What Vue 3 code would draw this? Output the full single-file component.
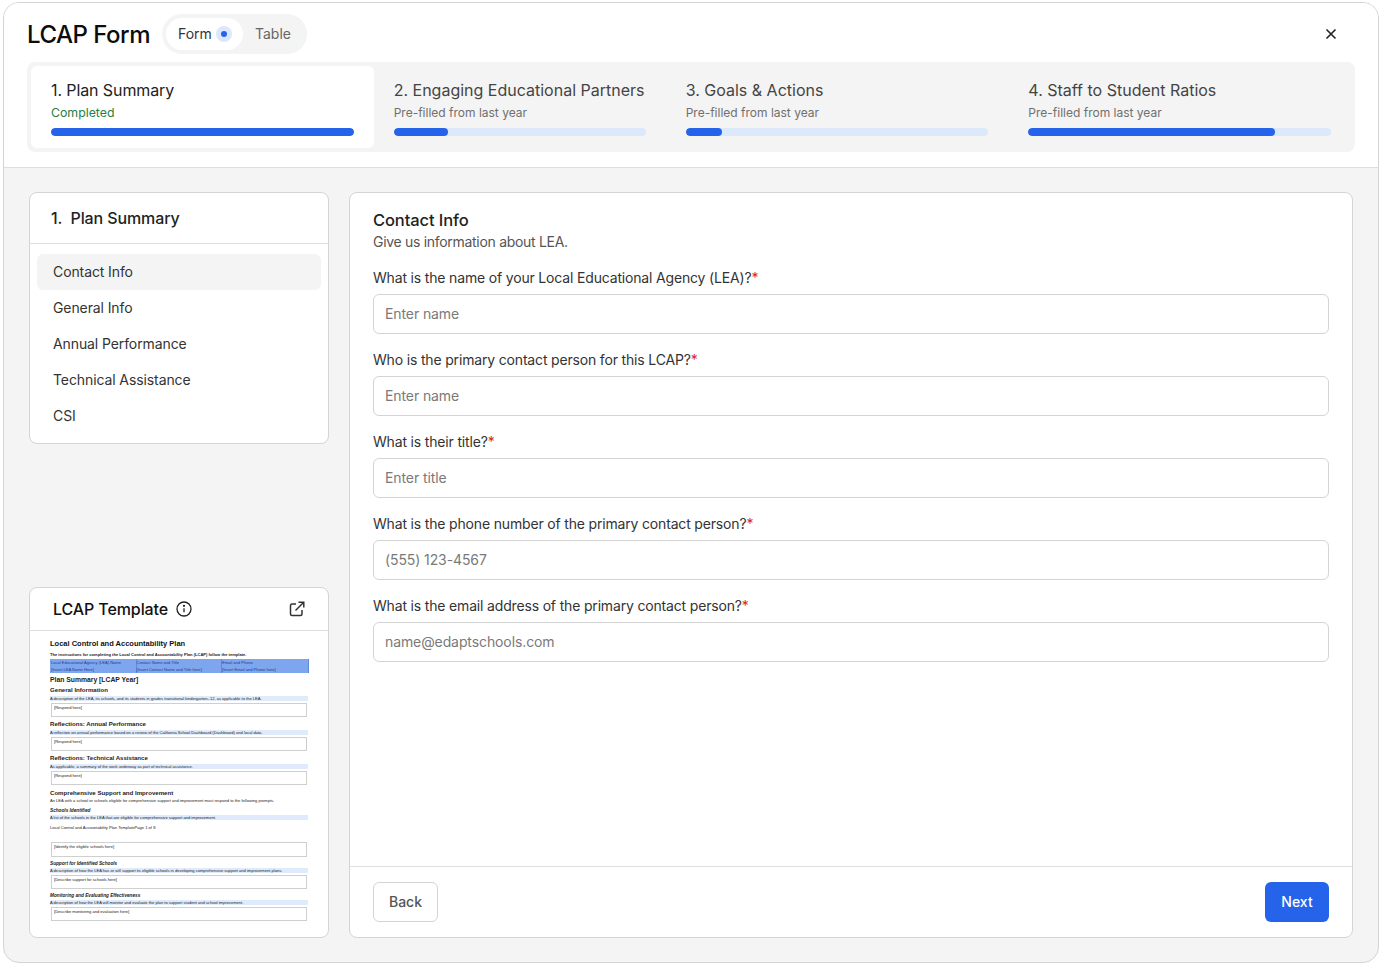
<template>
  <div class="window">
    <header class="top">
      <div class="title-row">
        <h1>LCAP Form</h1>
        <div class="toggle">
          <div class="toggle-on">
            Form
            <span class="dot"><i></i></span>
          </div>
          <div class="toggle-off">Table</div>
        </div>
        <svg class="close" width="12" height="12" viewBox="0 0 12 12" fill="none" stroke="#222" stroke-width="1.6">
          <path d="M1.5 1.5l9 9M10.5 1.5l-9 9" />
        </svg>
      </div>
      <div class="steps">
        <div v-for="(s, i) in steps" :key="s.title" class="step" :class="{ active: i === 0 }">
          <div class="step-title">{{ s.title }}</div>
          <div class="step-sub">{{ s.sub }}</div>
          <div class="track"><div class="fill" :style="{ width: s.pct + '%' }"></div></div>
        </div>
      </div>
    </header>

    <div class="body">
      <aside class="side">
        <div class="card nav">
          <div class="nav-head">1. &nbsp;Plan Summary</div>
          <ul>
            <li v-for="(n, i) in navItems" :key="n" :class="{ current: i === 0 }">{{ n }}</li>
          </ul>
        </div>

        <div class="card template">
          <div class="tpl-head">
            <span class="tpl-title">LCAP Template</span>
            <svg width="16" height="16" viewBox="0 0 16 16" fill="none" stroke="#222" stroke-width="1.3">
              <circle cx="8" cy="8" r="7" />
              <path d="M8 7.2v4" />
              <circle cx="8" cy="4.8" r=".5" fill="#222" />
            </svg>
            <svg class="ext" width="16" height="16" viewBox="0 0 16 16" fill="none" stroke="#333" stroke-width="1.5">
              <path d="M7 3H3a1.5 1.5 0 0 0-1.500 1.500V13A1.500 1.500 0 0 0 3 14.500h8.500A1.500 1.500 0 0 0 13 13V9" />
              <path d="M6.500 9.500L14.500 1.500M9.500 1.200h5.300v5.300" />
            </svg>
          </div>
          <div class="doc">
            <div class="d-title">Local Control and Accountability Plan</div>
            <div class="d-intro">The instructions for completing the Local Control and Accountability Plan (LCAP) follow the template.</div>
            <div class="d-table">
              <span>Local Educational Agency (LEA) Name</span><span>Contact Name and Title</span><span>Email and Phone</span>
              <span>[Insert LEA Name Here]</span><span>[Insert Contact Name and Title here]</span><span>[Insert Email and Phone here]</span>
            </div>
            <div class="d-h2">Plan Summary [LCAP Year]</div>
            <div class="d-h3">General Information</div>
            <div class="d-desc">A description of the LEA, its schools, and its students in grades transitional kindergarten–12, as applicable to the LEA.</div>
            <div class="d-box">[Respond here]</div>
            <div class="d-h3">Reflections: Annual Performance</div>
            <div class="d-desc">A reflection on annual performance based on a review of the California School Dashboard (Dashboard) and local data.</div>
            <div class="d-box">[Respond here]</div>
            <div class="d-h3">Reflections: Technical Assistance</div>
            <div class="d-desc">As applicable, a summary of the work underway as part of technical assistance.</div>
            <div class="d-box">[Respond here]</div>
            <div class="d-h3 gap">Comprehensive Support and Improvement</div>
            <div class="d-plain">An LEA with a school or schools eligible for comprehensive support and improvement must respond to the following prompts.</div>
            <div class="d-h4">Schools Identified</div>
            <div class="d-desc">A list of the schools in the LEA that are eligible for comprehensive support and improvement.</div>
            <div class="d-foot">Local Control and Accountability Plan TemplatePage 1 of 8</div>
            <div class="d-box tall">[Identify the eligible schools here]</div>
            <div class="d-h4">Support for Identified Schools</div>
            <div class="d-desc">A description of how the LEA has or will support its eligible schools in developing comprehensive support and improvement plans.</div>
            <div class="d-box">[Describe support for schools here]</div>
            <div class="d-h4">Monitoring and Evaluating Effectiveness</div>
            <div class="d-desc">A description of how the LEA will monitor and evaluate the plan to support student and school improvement.</div>
            <div class="d-box">[Describe monitoring and evaluation here]</div>
          </div>
        </div>
      </aside>

      <main class="card form">
        <div class="form-scroll">
          <h2>Contact Info</h2>
          <p class="lead">Give us information about LEA.</p>
          <div v-for="f in fields" :key="f.label" class="field">
            <label>{{ f.label }}<em>*</em></label>
            <input type="text" :placeholder="f.placeholder" />
          </div>
        </div>
        <footer class="form-foot">
          <button class="btn back">Back</button>
          <button class="btn next">Next</button>
        </footer>
      </main>
    </div>
  </div>
</template>

<script setup>
const steps = [
  { title: "1. Plan Summary", sub: "Completed", pct: 100 },
  { title: "2. Engaging Educational Partners", sub: "Pre-filled from last year", pct: 21.5 },
  { title: "3. Goals & Actions", sub: "Pre-filled from last year", pct: 12 },
  { title: "4. Staff to Student Ratios", sub: "Pre-filled from last year", pct: 81.5 },
];

const navItems = ["Contact Info", "General Info", "Annual Performance", "Technical Assistance", "CSI"];

const fields = [
  { label: "What is the name of your Local Educational Agency (LEA)?", placeholder: "Enter name" },
  { label: "Who is the primary contact person for this LCAP?", placeholder: "Enter name" },
  { label: "What is their title?", placeholder: "Enter title" },
  { label: "What is the phone number of the primary contact person?", placeholder: "(555) 123-4567" },
  { label: "What is the email address of the primary contact person?", placeholder: "name@edaptschools.com" },
];
</script>

<style>
html,
body {
  background: #ffffff;
}
</style>

<style scoped>
.window {
  box-sizing: border-box;
  width: 1376px;
  height: 961px;
  margin: 2px 0 0 3px;
  border: 1px solid #d4d4d4;
  border-radius: 16px;
  overflow: hidden;
  display: flex;
  flex-direction: column;
  background: #f4f4f4;
  font-family: Inter, "Noto Sans", sans-serif;
  color: #222;
}

.top {
  box-sizing: border-box;
  height: 165px;
  flex: none;
  background: #fff;
  border-bottom: 1px solid #dedede;
  padding: 11px 23px 0;
}

.title-row {
  display: flex;
  align-items: center;
  height: 40px;
}

h1 {
  margin: 0;
  font-size: 24px;
  font-weight: 500;
  letter-spacing: -0.5px;
  color: #0c0c0c;
  width: 135px;
}

.toggle {
  display: flex;
  align-items: center;
  height: 40px;
  width: 145px;
  box-sizing: border-box;
  padding: 4px;
  border-radius: 20px;
  background: #f4f4f4;
  font-size: 14px;
}

.toggle-on {
  box-sizing: border-box;
  display: flex;
  align-items: center;
  gap: 4px;
  width: 77px;
  height: 32px;
  padding: 0 0 1px 12px;
  border-radius: 16px;
  background: #fff;
  color: #333;
}

.dot {
  width: 16px;
  height: 16px;
  border-radius: 50%;
  background: #dbe8fb;
  display: flex;
  align-items: center;
  justify-content: center;
}

.dot i {
  width: 6px;
  height: 6px;
  border-radius: 50%;
  background: #2563eb;
}

.toggle-off {
  margin: 0 0 2px 12px;
  color: #666;
}

.close {
  margin-left: auto;
  margin-right: 18px;
}

.steps {
  display: grid;
  grid-template-columns: 1fr 292px 1fr 1fr;
  height: 90px;
  box-sizing: border-box;
  margin-top: 8px;
  padding: 4px;
  border-radius: 8px;
  background: #f4f4f4;
}

.step {
  box-sizing: border-box;
  padding: 12px 20px;
  border-radius: 6px;
}

.step.active {
  background: #fff;
}

.step-title {
  font-size: 16px;
  line-height: 24px;
  color: #444;
  white-space: nowrap;
}

.active .step-title {
  color: #222;
  letter-spacing: -0.1px;
}

.step-sub {
  font-size: 12px;
  line-height: 18px;
  margin-top: 2px;
  color: #707070;
}

.active .step-sub {
  color: #1f8043;
  font-size: 12.300px;
}

.track {
  height: 8px;
  margin-top: 6px;
  border-radius: 4px;
  background: #dce9fb;
  overflow: hidden;
}

.fill {
  height: 100%;
  border-radius: 4px;
  background: #2563eb;
}

.body {
  flex: 1;
  display: flex;
  gap: 20px;
  padding: 24px 25px 24px;
  min-height: 0;
}

.card {
  box-sizing: border-box;
  background: #fff;
  border: 1px solid #d4d4d4;
  border-radius: 8px;
}

.side {
  width: 300px;
  flex: none;
  display: flex;
  flex-direction: column;
  justify-content: space-between;
}

.nav {
  height: 252px;
}

.nav-head {
  height: 51px;
  box-sizing: border-box;
  padding-left: 21px;
  display: flex;
  align-items: center;
  font-size: 16px;
  font-weight: 500;
  letter-spacing: -0.1px;
  border-bottom: 1px solid #dedede;
}

.nav ul {
  list-style: none;
  margin: 0;
  padding: 10px 7px 0;
}

.nav li {
  height: 36px;
  line-height: 36px;
  padding-left: 16px;
  font-size: 14px;
  letter-spacing: -0.1px;
  color: #333;
  border-radius: 6px;
}

.nav li.current {
  background: #f4f4f4;
}

.template {
  height: 351px;
  overflow: hidden;
}

.tpl-head {
  box-sizing: border-box;
  height: 43px;
  display: flex;
  align-items: center;
  gap: 8px;
  padding: 0 23px;
  border-bottom: 1px solid #dedede;
}

.tpl-title {
  font-size: 16px;
  font-weight: 500;
  letter-spacing: -0.1px;
  color: #111;
}

.ext {
  margin-left: auto;
}

.doc {
  padding: 8px 20px 0;
  font-family: "Liberation Sans", Arial, sans-serif;
  font-size: 4.070px;
  color: #222;
  white-space: nowrap;
}

.d-title {
  font-size: 7.500px;
  line-height: 9px;
  font-weight: 700;
  color: #111;
}

.d-intro {
  margin-top: 4px;
  line-height: 6px;
  font-weight: 700;
  font-size: 4.070px;
}

.d-table {
  margin: 1px -1px 0 0;
  height: 14px;
  display: grid;
  grid-template-columns: 85.500px 85.500px 1fr;
  grid-template-rows: 7px 7px;
  align-items: center;
  padding-left: 1px;
  background: #7ea6ee;
  color: #24408a;
}

.d-table span {
  border-right: 1px solid #5f88dd;
  line-height: 7px;
}

.d-h2 {
  margin-top: 2px;
  font-size: 6.800px;
  line-height: 9px;
  font-weight: 700;
  color: #222;
}

.d-h3 {
  margin-top: 3px;
  font-size: 6.100px;
  line-height: 8px;
  font-weight: 700;
  color: #222;
}

.d-h2 + .d-h3 {
  margin-top: 2px;
}

.d-h3.gap {
  margin-top: 4px;
}

.d-h4 {
  margin-top: 3px;
  font-size: 4.700px;
  line-height: 7px;
  font-weight: 700;
  font-style: italic;
  color: #222;
}

.d-desc {
  margin-top: 2px;
  height: 5px;
  line-height: 5px;
  background: #dfeafa;
}

.d-h4 + .d-desc {
  margin-top: 1px;
}

.d-plain {
  margin-top: 1px;
  line-height: 6px;
}

.d-foot {
  margin-top: 5px;
  line-height: 6px;
}

.d-box {
  box-sizing: border-box;
  height: 14px;
  margin: 2px 1px 0;
  padding: 1px 2px;
  line-height: 5px;
  border: 1px solid #cfcfcf;
}

.d-box.tall {
  height: 15px;
  margin-top: 11px;
}

.form {
  flex: 1;
  display: flex;
  flex-direction: column;
}

.form-scroll {
  flex: 1;
  padding: 15px 23px 0;
}

h2 {
  margin: 0;
  font-size: 16.500px;
  line-height: 24px;
  font-weight: 500;
  letter-spacing: -0.1px;
  color: #222;
}

.lead {
  margin: 0 0 16px;
  font-size: 14px;
  line-height: 20px;
  letter-spacing: -0.3px;
  color: #555;
}

.field {
  margin-bottom: 16px;
}

.field label {
  display: block;
  height: 26px;
  line-height: 20px;
  padding-top: 0;
  font-size: 14px;
  letter-spacing: -0.17px;
  color: #333;
}

.field em {
  font-style: normal;
  color: #dc2626;
}

.field input {
  display: block;
  box-sizing: border-box;
  width: 100%;
  height: 40px;
  padding: 0 11px 1px;
  border: 1px solid #d4d4d4;
  border-radius: 6px;
  background: #fff;
  font: inherit;
  font-size: 14px;
  letter-spacing: -0.1px;
  outline: none;
}

.field input::placeholder {
  color: #7a7a7a;
  opacity: 1;
}

.form-foot {
  flex: none;
  box-sizing: border-box;
  height: 71px;
  display: flex;
  justify-content: space-between;
  padding: 15px 23px 0;
  border-top: 1px solid #dedede;
}

.btn {
  height: 40px;
  padding: 0 0 1px;
  border-radius: 6px;
  font: inherit;
  font-size: 14px;
  font-weight: 450;
}

.back {
  width: 65px;
  background: #fff;
  border: 1px solid #d4d4d4;
  color: #555;
}

.next {
  width: 64px;
  background: #2563eb;
  border: 0;
  color: #fff;
}
</style>
